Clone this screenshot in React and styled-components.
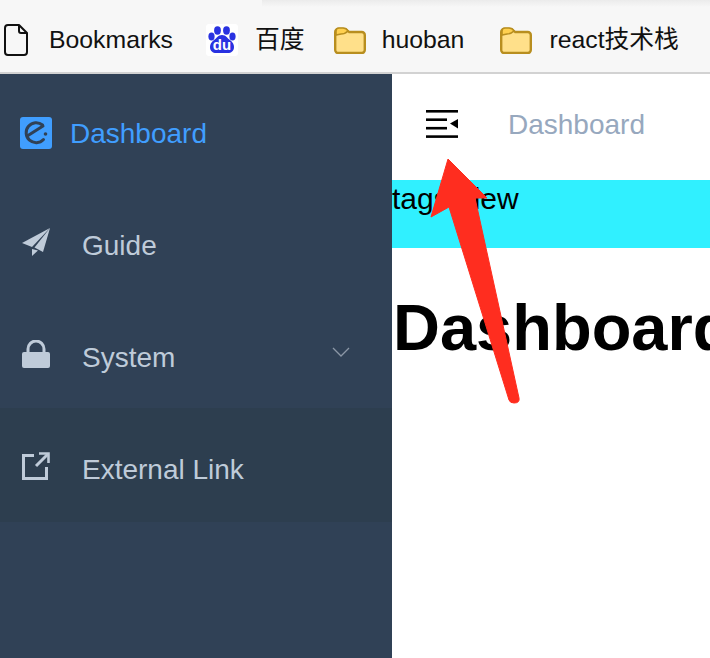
import styled, { createGlobalStyle } from "styled-components"

const GlobalStyle = createGlobalStyle`
  html, body {
    margin: 0;
    padding: 0;
    background: #fff;
  }
  body {
    font-family: "Liberation Sans", Arial, sans-serif;
  }
`

const Page = styled.div`
  position: relative;
  width: 710px;
  height: 658px;
  overflow: hidden;
  display: flex;
  flex-direction: column;
`

const BookmarkBar = styled.div`
  position: relative;
  box-sizing: border-box;
  height: 74px;
  flex-shrink: 0;
  display: flex;
  align-items: center;
  gap: 33px;
  padding: 11px 0 4px 4px;
  background: #f7f7f7;
  border-bottom: 2px solid #d2d2d2;

  /* shadow of the window toolbar above the bar */
  &::before {
    content: "";
    position: absolute;
    top: 0;
    left: 262px;
    right: 0;
    height: 7px;
    background: linear-gradient(#ebebeb, #f7f7f7);
  }
`

const Bookmark = styled.div`
  display: flex;
  align-items: center;
  gap: ${(p) => p.$gap || 17}px;
  margin-right: ${(p) => p.$trail || 0}px;
  font-size: 24.8px;
  line-height: 32px;
  color: #111;
  white-space: nowrap;
  font-family: "Liberation Sans", "Noto Sans CJK SC", sans-serif;
`

const Body = styled.div`
  flex: 1;
  display: flex;
  min-height: 0;
`

const Sidebar = styled.nav`
  width: 392px;
  flex-shrink: 0;
  background: #304156;
`

const MenuRow = styled.div`
  box-sizing: border-box;
  height: ${(p) => (p.$hover ? 114 : 112)}px;
  margin-top: ${(p) => (p.$hover ? -2 : 0)}px;
  padding: ${(p) => (p.$hover ? 8 : 6)}px 42px 0 ${(p) => (p.$active ? 20 : 22)}px;
  display: flex;
  align-items: center;
  gap: ${(p) => (p.$active ? 18 : 32)}px;
  background: ${(p) => (p.$hover ? "#2d3e4f" : "transparent")};
  color: ${(p) => (p.$active ? "#409eff" : "#bfcbd9")};
  font-size: 28px;
  line-height: 36px;
`

const MenuIconSlot = styled.span`
  display: flex;
  margin-bottom: ${(p) => p.$lift || 0}px;
`

const MenuLabel = styled.span`
  flex: 1;
  padding-top: 2px;
  white-space: nowrap;
`

const Main = styled.main`
  flex: 1;
  min-width: 0;
  overflow: hidden;
`

const Navbar = styled.header`
  box-sizing: border-box;
  height: 106px;
  padding: 36px 0 0 34px;
  display: flex;
  align-items: flex-start;
  gap: 50px;
`

const Crumb = styled.span`
  padding-top: 1px;
  font-size: 28px;
  line-height: 28px;
  color: #97a8be;
`

const TagsBar = styled.div`
  box-sizing: border-box;
  height: 68px;
  background: #30f0ff;
  font-size: 30px;
  line-height: 38px;
  color: #000;
  white-space: nowrap;
`

const Title = styled.h1`
  margin: 42px 0 0 1px;
  font-size: 65px;
  line-height: 75px;
  font-weight: 700;
  color: #000;
  white-space: nowrap;
`

const Arrow = styled.svg`
  position: absolute;
  left: 425px;
  top: 155px;
`

const FileIcon = () => (
  <svg width="24" height="32" viewBox="0 0 24 32" fill="none" stroke="#111" strokeWidth="2" strokeLinejoin="round">
    <path d="M4 1h11l8 8v19a3 3 0 0 1-3 3H4a3 3 0 0 1-3-3V4a3 3 0 0 1 3-3z" />
    <path d="M15 1v6a2 2 0 0 0 2 2h6" />
  </svg>
)

const BaiduIcon = () => (
  <svg width="32" height="32" viewBox="0 0 32 32">
    <rect width="32" height="32" rx="3" fill="#fff" />
    <g fill="#2932e1">
      <ellipse cx="11.5" cy="6.5" rx="3.4" ry="4.2" />
      <ellipse cx="20.5" cy="6.5" rx="3.4" ry="4.2" />
      <ellipse cx="5.5" cy="12.5" rx="3.1" ry="3.9" />
      <ellipse cx="26.5" cy="12.5" rx="3.1" ry="3.9" />
      <path d="M16 11c4 0 5 3 8 5 3 2 4 5 4 7 0 4-3 6-6 6H10c-3 0-6-2-6-6 0-2 1-5 4-7 3-2 4-5 8-5z" />
    </g>
    <text x="16" y="26" textAnchor="middle" fontSize="15" fontWeight="700" fill="#fff" fontFamily="Liberation Sans, sans-serif">du</text>
  </svg>
)

const FolderIcon = () => (
  <svg width="32" height="28" viewBox="0 0 32 28">
    <path d="M1.2 6a3 3 0 0 1 3-3h5c3 0 4 1 6 3h12.6a3 3 0 0 1 3 3v15a3 3 0 0 1-3 3H4.2a3 3 0 0 1-3-3z" fill="#ffe08a" stroke="#b88e1f" strokeWidth="2.4" />
    <path d="M2 9V5a3 3 0 0 1 3-3h4c3 0 4 1 5 3-2 2-4 3-7 3z" fill="#ffd04f" stroke="#b88e1f" strokeWidth="1.6" />
  </svg>
)

const ElementIcon = () => (
  <svg width="32" height="32" viewBox="0 0 32 32" fill="none">
    <rect width="32" height="32" rx="3" fill="#409eff" />
    <path d="M23.5 22.5A10 10 0 1 1 22.5 8" stroke="#304156" strokeWidth="3" strokeLinecap="round" />
    <path d="M8 18.5 23 9" stroke="#304156" strokeWidth="3" strokeLinecap="round" />
    <circle cx="25.5" cy="17" r="1.8" fill="#304156" />
  </svg>
)

const PlaneIcon = () => (
  <svg width="28" height="28" viewBox="0 0 28 28" fill="#bfcbd9">
    <polygon points="0,15 28,0 10,19" />
    <polygon points="28,0 21,24 12.5,19.5" />
    <polygon points="10,21 16,22.5 10,28" />
  </svg>
)

const LockIcon = () => (
  <svg width="28" height="28" viewBox="0 0 28 28">
    <path d="M6 13V9a8 8 0 0 1 16 0v4" fill="none" stroke="#bfcbd9" strokeWidth="3" />
    <rect y="12" width="28" height="16" rx="2" fill="#bfcbd9" />
  </svg>
)

const LinkIcon = () => (
  <svg width="28" height="28" viewBox="0 0 28 28" fill="none" stroke="#bfcbd9" strokeWidth="3">
    <path d="M12 3.5H1.5v23h23V15" />
    <path d="M14 14 26 2" />
    <path d="M17 1.5h9.5V11" strokeWidth="2.6" />
  </svg>
)

const Chevron = () => (
  <svg width="18" height="10" viewBox="0 0 18 10" fill="none" stroke="#8b97a6" strokeWidth="1.3">
    <path d="M1 1l8 8 8-8" />
  </svg>
)

const MenuIcon = () => (
  <svg width="32" height="28" viewBox="0 0 32 28" fill="#000">
    <rect y="0" width="32" height="2.6" />
    <rect y="8.4" width="21" height="2.6" />
    <rect y="16.9" width="21" height="2.6" />
    <rect y="25.3" width="32" height="2.6" />
    <polygon points="24,13.6 32,9 32,18.4" />
  </svg>
)

const bookmarks = [
  { label: "Bookmarks", icon: <FileIcon />, gap: 21 },
  { label: "百度", icon: <BaiduIcon />, trail: -4 },
  { label: "huoban", icon: <FolderIcon />, gap: 16, trail: 3 },
  { label: "react技术栈", icon: <FolderIcon /> },
]

export default function App() {
  return (
    <Page>
      <GlobalStyle />
      <BookmarkBar>
        {bookmarks.map((b) => (
          <Bookmark key={b.label} $gap={b.gap} $trail={b.trail}>
            {b.icon}
            <span>{b.label}</span>
          </Bookmark>
        ))}
      </BookmarkBar>
      <Body>
        <Sidebar>
          <MenuRow $active>
            <MenuIconSlot>
              <ElementIcon />
            </MenuIconSlot>
            <MenuLabel>Dashboard</MenuLabel>
          </MenuRow>
          <MenuRow>
            <MenuIconSlot $lift={6}>
              <PlaneIcon />
            </MenuIconSlot>
            <MenuLabel>Guide</MenuLabel>
          </MenuRow>
          <MenuRow>
            <MenuIconSlot $lift={6}>
              <LockIcon />
            </MenuIconSlot>
            <MenuLabel>System</MenuLabel>
            <MenuIconSlot $lift={10}>
              <Chevron />
            </MenuIconSlot>
          </MenuRow>
          <MenuRow $hover>
            <MenuIconSlot $lift={6}>
              <LinkIcon />
            </MenuIconSlot>
            <MenuLabel>External Link</MenuLabel>
          </MenuRow>
        </Sidebar>
        <Main>
          <Navbar>
            <MenuIcon />
            <Crumb>Dashboard</Crumb>
          </Navbar>
          <TagsBar>tags-view</TagsBar>
          <Title>Dashboard</Title>
        </Main>
      </Body>
      <Arrow width="100" height="255" viewBox="0 0 100 255">
        <path
          d="M23 4 62 43 50 43 94 243Q95 248 89 248 85 248 84 245L24 52 6 62Z"
          fill="#ff2d1f"
          stroke="#ff2d1f"
          strokeWidth="1"
          strokeLinejoin="round"
        />
      </Arrow>
    </Page>
  )
}
